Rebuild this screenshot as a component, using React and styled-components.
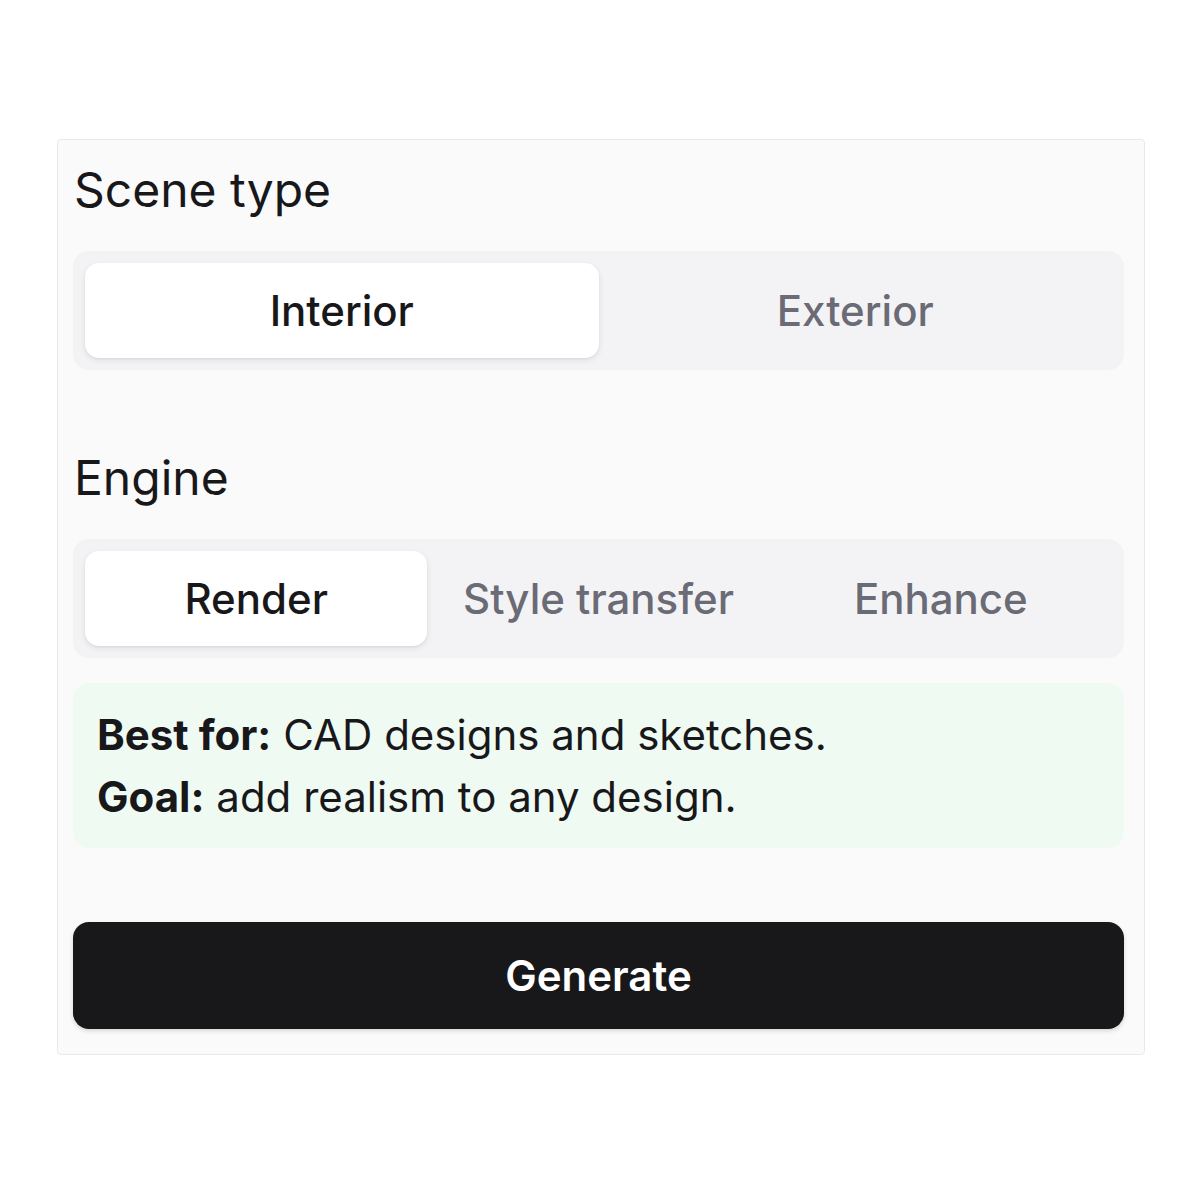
import React, { useState } from 'react';
import styled, { createGlobalStyle } from 'styled-components';

const GlobalStyle = createGlobalStyle`
  html, body {
    margin: 0;
    padding: 0;
    background: #ffffff;
  }
  body {
    font-family: Inter, "Noto Sans", sans-serif;
    color: #18181b;
  }
`;

const Page = styled.div`
  padding: 139px 55px 139px 57px;
`;

const Panel = styled.div`
  background: #fafafa;
  border: 1px solid #e9e9eb;
  border-radius: 4px;
  padding: 21px 20px 25px 15px;
  display: flex;
  flex-direction: column;
`;

const Section = styled.div`
  display: flex;
  flex-direction: column;
  margin-bottom: ${props => props.gap || 0}px;
`;

const Label = styled.h2`
  margin: 0 0 32px 1px;
  font-size: 48px;
  font-weight: 400;
  line-height: 58px;
  color: #18181b;
`;

const Segmented = styled.div`
  display: grid;
  grid-template-columns: repeat(${props => props.count}, 1fr);
  background: #f3f3f5;
  border-radius: 16px;
  padding: 12px;
`;

const Tab = styled.button`
  height: 95px;
  border: none;
  border-radius: 14px;
  background: ${props => (props.active ? '#ffffff' : 'transparent')};
  box-shadow: ${props =>
    props.active ? '0 2px 6px rgba(0, 0, 0, 0.09), 0 1px 2px rgba(0, 0, 0, 0.05)' : 'none'};
  color: ${props => (props.active ? '#18181b' : '#6b6b76')};
  font-family: Inter, "Noto Sans", sans-serif;
  font-size: 42px;
  font-weight: 500;
  cursor: pointer;
  padding: 0;
`;

const InfoBox = styled.div`
  margin-top: 25px;
  background: #effaf3;
  border-radius: 16px;
  padding: 21px 24px 20px;
  font-size: 42px;
  line-height: 62px;
  color: #18181b;
`;

const InfoLine = styled.div``;

const Strong = styled.strong`
  font-weight: 700;
`;

const GenerateButton = styled.button`
  margin-top: 74px;
  height: 107px;
  border: none;
  border-radius: 16px;
  background: #18181b;
  color: #ffffff;
  font-family: Inter, "Noto Sans", sans-serif;
  font-size: 42px;
  font-weight: 600;
  box-shadow: 0 2px 4px rgba(0, 0, 0, 0.15);
  cursor: pointer;
`;

const sceneTypes = ['Interior', 'Exterior'];
const engines = ['Render', 'Style transfer', 'Enhance'];

export default function App() {
  const [scene, setScene] = useState('Interior');
  const [engine, setEngine] = useState('Render');

  return (
    <>
      <GlobalStyle />
      <Page>
        <Panel>
          <Section gap={79}>
            <Label>Scene type</Label>
            <Segmented count={sceneTypes.length}>
              {sceneTypes.map(s => (
                <Tab key={s} active={scene === s} onClick={() => setScene(s)}>
                  {s}
                </Tab>
              ))}
            </Segmented>
          </Section>

          <Section>
            <Label>Engine</Label>
            <Segmented count={engines.length}>
              {engines.map(e => (
                <Tab key={e} active={engine === e} onClick={() => setEngine(e)}>
                  {e}
                </Tab>
              ))}
            </Segmented>
          </Section>

          <InfoBox>
            <InfoLine>
              <Strong>Best for:</Strong> CAD designs and sketches.
            </InfoLine>
            <InfoLine>
              <Strong>Goal:</Strong> add realism to any design.
            </InfoLine>
          </InfoBox>

          <GenerateButton>Generate</GenerateButton>
        </Panel>
      </Page>
    </>
  );
}
